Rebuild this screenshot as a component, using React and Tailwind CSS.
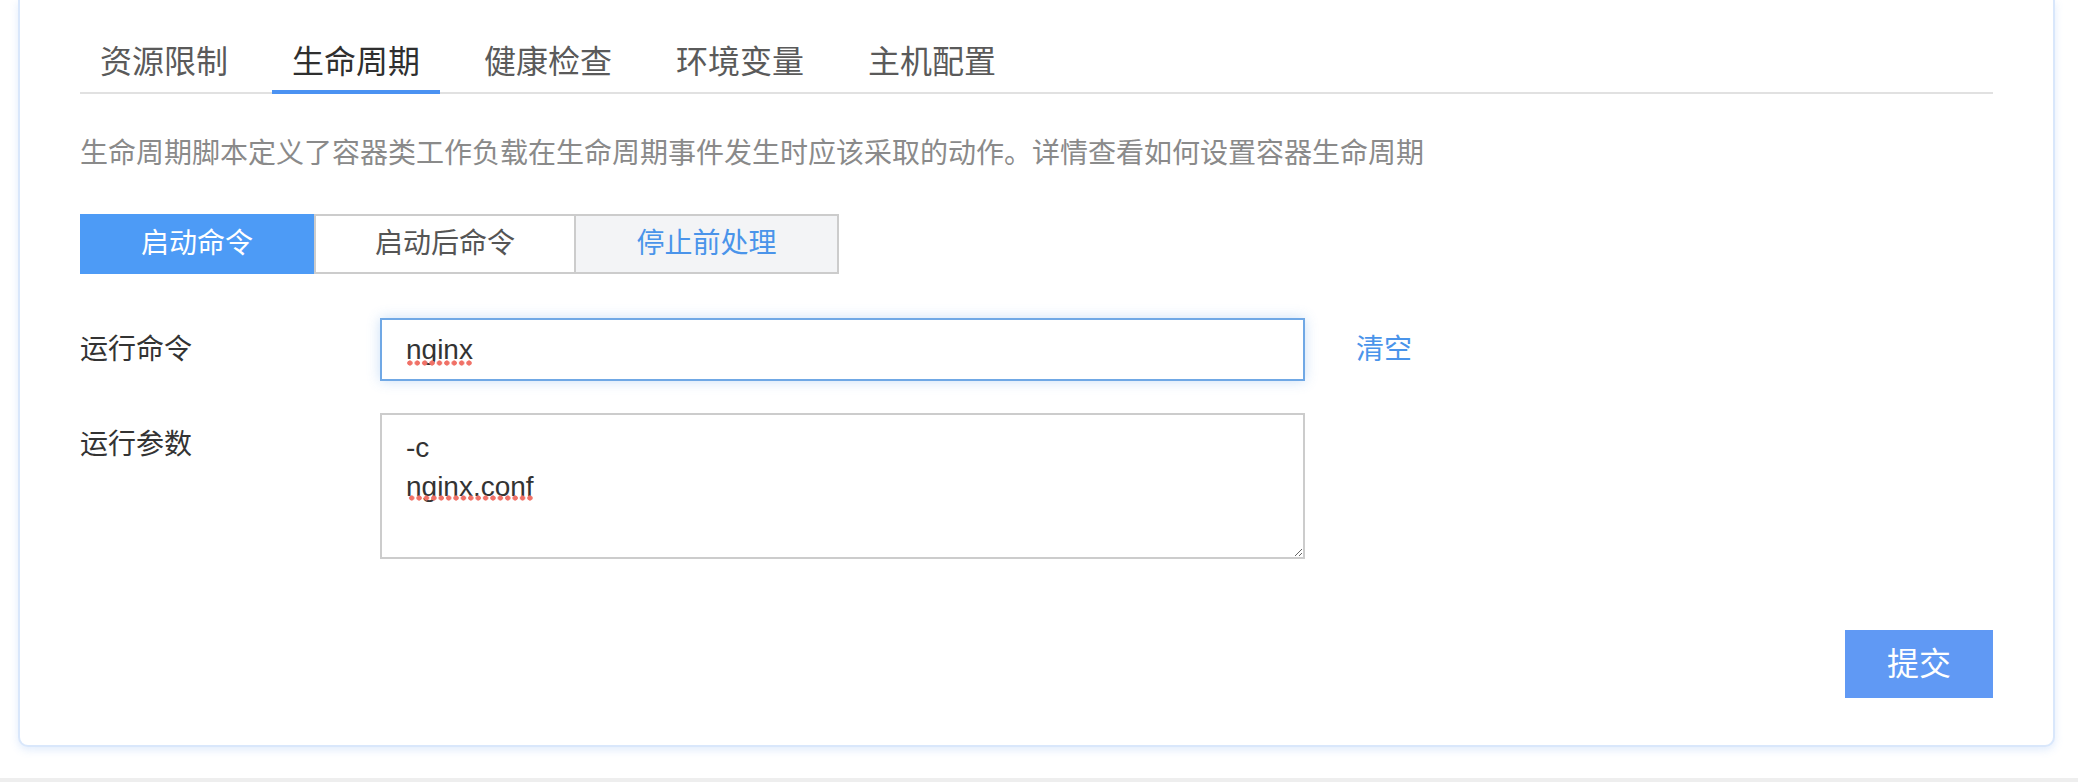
import React, { useState } from "react";

const FONT = '"Liberation Sans", "Noto Sans CJK SC", sans-serif';

const TABS = ["资源限制", "生命周期", "健康检查", "环境变量", "主机配置"];

const HOOKS = [
  { key: "start", label: "启动命令", width: "w-[234px]" },
  { key: "post", label: "启动后命令", width: "w-[262px]" },
  { key: "pre", label: "停止前处理", width: "w-[263px]" },
];

// spell-check style dotted underline
const DOTS = "bg-[radial-gradient(circle,#f07167_2.3px,transparent_2.9px)] bg-[length:7.4px_6px] bg-repeat-x bg-bottom";

export default function App() {
  const [tab, setTab] = useState("生命周期");
  const [hook, setHook] = useState("start");
  const [command, setCommand] = useState("nginx");

  return (
    <div className="w-[2078px] h-[782px] bg-white overflow-hidden" style={{ fontFamily: FONT }}>
      <div className="ml-[18px] w-[2037px] bg-white border-2 border-t-0 border-[#d9e7fb] rounded-b-[10px] shadow-[0_3px_8px_rgba(90,150,240,0.18)] px-[60px] pt-[40px] pb-[47px]">
        {/* tabs */}
        <div className="flex gap-[24px] border-b-2 border-[#e1e1e1]">
          {TABS.map((t) => (
            <button
              key={t}
              onClick={() => setTab(t)}
              className={`relative px-5 pb-[8px] text-[32px] leading-[44px] ${
                tab === t ? "text-[#2f2f2f]" : "text-[#5a5a5a]"
              }`}
            >
              {t}
              {tab === t && <span className="absolute left-0 right-0 bottom-[-2px] h-[4px] bg-[#4b92f2]" />}
            </button>
          ))}
        </div>

        <p className="mt-[40px] text-[28px] leading-[40px] text-[#8a8a8a]">
          生命周期脚本定义了容器类工作负载在生命周期事件发生时应该采取的动作。详情查看如何设置容器生命周期
        </p>

        {/* hook switch */}
        <div className="mt-[40px] flex">
          {HOOKS.map((h, i) => {
            const active = hook === h.key;
            let cls = "bg-white text-[#555555] border-2 border-[#cccccc]";
            if (active) cls = "bg-[#4d9bf6] text-white";
            else if (h.key === "pre") cls = "bg-[#f3f4f6] text-[#4a94ea] border-2 border-[#cccccc]";
            if (i === 2 && !active) cls += " border-l-0";
            return (
              <button
                key={h.key}
                onClick={() => setHook(h.key)}
                className={`${h.width} h-[60px] flex items-center justify-center text-[28px] ${cls}`}
              >
                {h.label}
              </button>
            );
          })}
        </div>

        {/* command */}
        <div className="mt-[44px] flex items-center">
          <label className="w-[300px] text-[28px] leading-[40px] text-[#333333]">运行命令</label>
          <div className="relative">
            <input
              value={command}
              onChange={(e) => setCommand(e.target.value)}
              spellCheck={false}
              className="w-[925px] h-[63px] border-2 border-[#70a8e5] pl-[24px] text-[28px] text-[#333333] outline-none shadow-[0_0_12px_rgba(80,150,230,0.3)]"
              style={{ fontFamily: FONT }}
            />
            <span
              aria-hidden="true"
              className={`pointer-events-none absolute left-[26px] top-[10px] text-[28px] leading-[38px] text-transparent whitespace-pre ${DOTS}`}
            >
              {command}
            </span>
          </div>
          <button onClick={() => setCommand("")} className="ml-[51px] text-[28px] leading-[40px] text-[#4a94ea]">
            清空
          </button>
        </div>

        {/* args */}
        <div className="mt-[32px] flex items-start">
          <label className="w-[300px] pt-[12px] text-[28px] leading-[40px] text-[#333333]">运行参数</label>
          <div className="w-[925px] h-[146px] border-2 border-[#cccccc] pl-[24px] pt-[13px] text-[28px] leading-[39px] text-[#333333] resize overflow-auto">
            <div>-c</div>
            <div>
              <span className="relative inline-block">
                nginx.conf
                <span className={`absolute left-[2px] right-0 top-[28px] h-[6px] ${DOTS}`} />
              </span>
            </div>
          </div>
        </div>

        <div className="mt-[71px] flex justify-end">
          <button className="w-[148px] h-[68px] bg-[#6099f4] text-white text-[32px]">提交</button>
        </div>
      </div>
      <div className="mt-[31px] h-[4px] bg-[#eeeeee]" />
    </div>
  );
}
